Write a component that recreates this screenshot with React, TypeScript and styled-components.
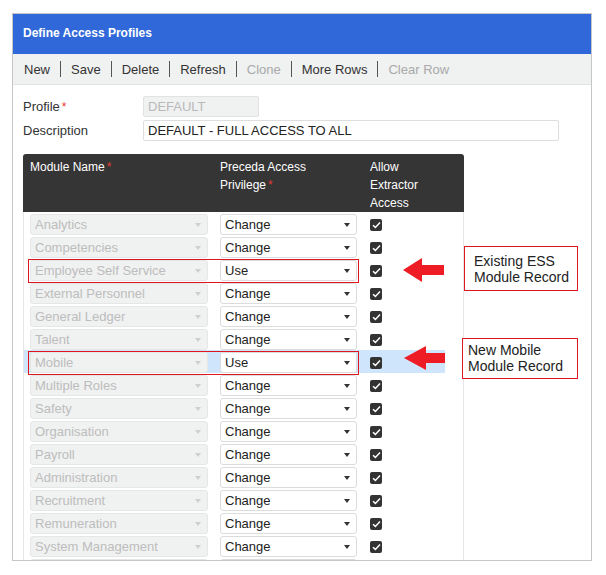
import React from 'react';
import styled, { createGlobalStyle } from 'styled-components';

const GlobalStyle = createGlobalStyle`
  html, body {
    margin: 0;
    padding: 0;
    background: #ffffff;
    font-family: "Liberation Sans", Arial, sans-serif;
  }
`;

const Page = styled.div`
  padding: 13px 0 0 12px;
`;

const Panel = styled.div`
  position: relative;
  width: 578px;
  height: 546px;
  border: 1px solid #c6c6c6;
  overflow: hidden;
  background: #ffffff;
`;

const TitleBar = styled.div`
  box-sizing: border-box;
  height: 40px;
  background: #3068d9;
  color: #ffffff;
  font-size: 12px;
  font-weight: bold;
  display: flex;
  align-items: center;
  padding: 0 10px 2px;
`;

const Toolbar = styled.div`
  height: 30px;
  background: #f0f1f1;
  border-bottom: 1px solid #e3e3e3;
  display: flex;
  align-items: center;
  padding: 0 11px;
  font-size: 13px;
`;

const ToolItem = styled.span<{ $disabled?: boolean }>`
  color: ${(p) => (p.$disabled ? '#a9a9a9' : '#333333')};
`;

const ToolSep = styled.span`
  width: 1px;
  height: 16px;
  background: #555555;
  margin: 0 10px;
`;

const Form = styled.div`
  padding: 11px 10px 0 10px;
  display: flex;
  flex-direction: column;
  gap: 3px;
`;

const FieldRow = styled.div`
  display: flex;
  align-items: center;
`;

const Label = styled.div`
  width: 120px;
  font-size: 13px;
  color: #333333;
`;

const Req = styled.span`
  color: #e53935;
  margin-left: 2px;
  font-size: 12px;
`;

const Input = styled.div<{ $width: number; $disabled?: boolean }>`
  box-sizing: border-box;
  width: ${(p) => p.$width}px;
  height: 21px;
  border: 1px solid ${(p) => (p.$disabled ? '#e2e2e2' : '#dedede')};
  border-radius: 2px;
  background: ${(p) => (p.$disabled ? '#f0f1f1' : '#ffffff')};
  color: ${(p) => (p.$disabled ? '#b9b9b9' : '#222222')};
  font-size: 13px;
  line-height: 19px;
  padding-left: 4px;
`;

const Table = styled.div`
  margin: 13px 0 0 10px;
  width: 441px;
`;

const HeadRow = styled.div`
  display: grid;
  grid-template-columns: 190px 150px 101px;
  background: #353535;
  border-radius: 3px 3px 0 0;
  color: #ffffff;
  font-size: 12px;
  line-height: 18px;
  padding: 4px 0 0;
`;

const HeadCell = styled.div<{ $narrow?: boolean }>`
  padding-left: 7px;
  padding-right: ${(p) => (p.$narrow ? '20px' : '4px')};
`;

const Body = styled.div`
  border-left: 1px solid #e6e6e6;
  border-right: 1px solid #e6e6e6;
  height: 400px;
`;

const Row = styled.div<{ $active?: boolean }>`
  position: relative;
  width: 421px;
  height: 23px;
  box-sizing: border-box;
  padding-top: 2px;
  display: grid;
  grid-template-columns: 189px 150px 82px;
  align-items: center;
  background: ${(p) => (p.$active ? '#cfe5fb' : 'transparent')};
`;

const Cell = styled.div<{ $pad: number }>`
  padding-left: ${(p) => p.$pad}px;
  display: flex;
  align-items: center;
`;

const Select = styled.div<{ $width: number; $locked?: boolean }>`
  box-sizing: border-box;
  position: relative;
  width: ${(p) => p.$width}px;
  height: 21px;
  border: 1px solid ${(p) => (p.$locked ? '#e5e6e6' : '#dcdcdc')};
  border-radius: 3px;
  background: ${(p) => (p.$locked ? '#f0f1f1' : '#ffffff')};
  color: ${(p) => (p.$locked ? '#bdbdbd' : '#222222')};
  font-size: 13px;
  line-height: 19px;
  padding-left: 4px;
  white-space: nowrap;
  overflow: hidden;
`;

const Caret = styled.span<{ $locked?: boolean }>`
  position: absolute;
  right: 6px;
  top: 8px;
  width: 0;
  height: 0;
  border-left: 3.5px solid transparent;
  border-right: 3.5px solid transparent;
  border-top: 4px solid ${(p) => (p.$locked ? '#cfcfcf' : '#333333')};
`;

const Check = styled.span`
  width: 12px;
  height: 12px;
  border-radius: 2px;
  background: #333333;
  display: flex;
  align-items: center;
  justify-content: center;
`;

const Marker = styled.span`
  position: absolute;
  left: 4px;
  top: 1px;
  width: 331px;
  height: 24px;
  box-sizing: border-box;
  border: 1px solid #e0161f;
  pointer-events: none;
`;

const Arrow = styled.svg<{ $x: number; $y: number }>`
  position: absolute;
  left: ${(p) => p.$x}px;
  top: ${(p) => p.$y}px;
`;

const Callout = styled.div<{ $x: number; $y: number; $w: number; $h: number; $pt: number; $pl: number }>`
  position: absolute;
  left: ${(p) => p.$x}px;
  top: ${(p) => p.$y}px;
  width: ${(p) => p.$w}px;
  height: ${(p) => p.$h}px;
  box-sizing: border-box;
  border: 1px solid #e0161f;
  background: #ffffff;
  color: #222222;
  font-size: 14px;
  line-height: 16px;
  padding: ${(p) => `${p.$pt}px 0 0 ${p.$pl}px`};
`;

type Module = { name: string; access: string; active?: boolean; marked?: boolean };

const modules: Module[] = [
  { name: 'Analytics', access: 'Change' },
  { name: 'Competencies', access: 'Change' },
  { name: 'Employee Self Service', access: 'Use', marked: true },
  { name: 'External Personnel', access: 'Change' },
  { name: 'General Ledger', access: 'Change' },
  { name: 'Talent', access: 'Change' },
  { name: 'Mobile', access: 'Use', active: true, marked: true },
  { name: 'Multiple Roles', access: 'Change' },
  { name: 'Safety', access: 'Change' },
  { name: 'Organisation', access: 'Change' },
  { name: 'Payroll', access: 'Change' },
  { name: 'Administration', access: 'Change' },
  { name: 'Recruitment', access: 'Change' },
  { name: 'Remuneration', access: 'Change' },
  { name: 'System Management', access: 'Change' },
  // next row only peeks in under the panel edge
  { name: '', access: '' },
];

const tools: { label: string; disabled?: boolean }[] = [
  { label: 'New' },
  { label: 'Save' },
  { label: 'Delete' },
  { label: 'Refresh' },
  { label: 'Clone', disabled: true },
  { label: 'More Rows' },
  { label: 'Clear Row', disabled: true },
];

const LeftArrow: React.FC<{ x: number; y: number; head?: number }> = ({ x, y, head = 20 }) => (
  <Arrow $x={x} $y={y} width="42" height="24" viewBox="0 0 42 24">
    <polygon points={`0,12 ${head},0 ${head},7 41,7 41,17 ${head},17 ${head},24`} fill="#ee1c25" />
  </Arrow>
);

const App: React.FC = () => {
  return (
    <>
      <GlobalStyle />
      <Page>
        <Panel>
          <TitleBar>Define Access Profiles</TitleBar>
          <Toolbar>
            {tools.map((t, i) => (
              <React.Fragment key={t.label}>
                {i > 0 && <ToolSep />}
                <ToolItem $disabled={t.disabled}>{t.label}</ToolItem>
              </React.Fragment>
            ))}
          </Toolbar>

          <Form>
            <FieldRow>
              <Label>
                Profile<Req>*</Req>
              </Label>
              <Input $width={116} $disabled>DEFAULT</Input>
            </FieldRow>
            <FieldRow>
              <Label>Description</Label>
              <Input $width={416}>DEFAULT - FULL ACCESS TO ALL</Input>
            </FieldRow>
          </Form>

          <Table>
            <HeadRow>
              <HeadCell>
                Module Name<Req>*</Req>
              </HeadCell>
              <HeadCell>
                Preceda Access
                <br />
                Privilege<Req>*</Req>
              </HeadCell>
              <HeadCell $narrow>Allow Extractor Access</HeadCell>
            </HeadRow>
            <Body>
              {modules.map((m, i) => (
                <Row key={i} $active={m.active}>
                  <Cell $pad={6}>
                    <Select $width={178} $locked>
                      {m.name}
                      <Caret $locked />
                    </Select>
                  </Cell>
                  <Cell $pad={7}>
                    <Select $width={137}>
                      {m.access}
                      <Caret />
                    </Select>
                  </Cell>
                  <Cell $pad={7}>
                    <Check>
                      <svg width="9" height="8" viewBox="0 0 9 8">
                        <polyline points="1,4.2 3.4,6.4 8,1.6" fill="none" stroke="#ffffff" strokeWidth="1.5" />
                      </svg>
                    </Check>
                  </Cell>
                  {m.marked && <Marker />}
                </Row>
              ))}
            </Body>
          </Table>

          <LeftArrow x={390} y={244} head={19} />
          <Callout $x={451} $y={232} $w={114} $h={45} $pt={6} $pl={9}>
            Existing ESS
            <br />
            Module Record
          </Callout>

          <LeftArrow x={391} y={332} head={22} />
          <Callout $x={449} $y={324} $w={116} $h={41} $pt={3} $pl={5}>
            New Mobile
            <br />
            Module Record
          </Callout>
        </Panel>
      </Page>
    </>
  );
};

export default App;
